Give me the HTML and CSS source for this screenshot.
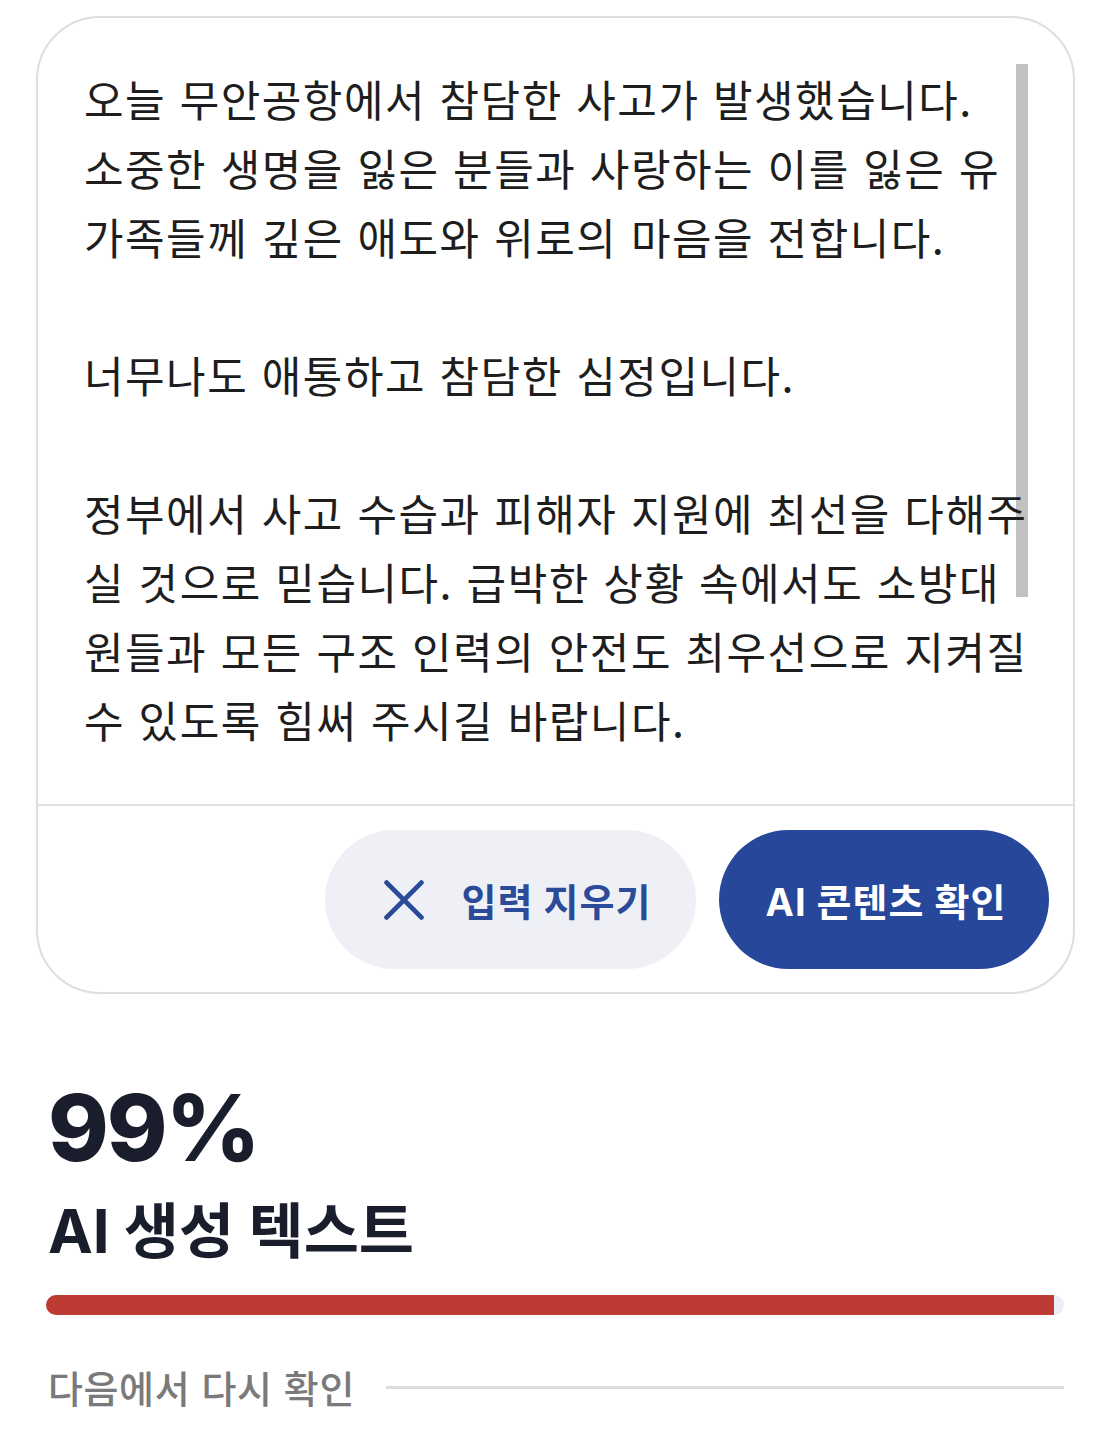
FILE: index.html
```html
<!DOCTYPE html>
<html lang="ko">
<head>
<meta charset="utf-8">
<link rel="stylesheet" href="styles.css">
</head>
<body>
<div class="card">
  <div class="input-area">
    <p>오늘 무안공항에서 참담한 사고가 발생했습니다.<br>소중한 생명을 잃은 분들과 사랑하는 이를 잃은 유<br>가족들께 깊은 애도와 위로의 마음을 전합니다.</p>
    <p>너무나도 애통하고 참담한 심정입니다.</p>
    <p>정부에서 사고 수습과 피해자 지원에 최선을 다해주<br>실 것으로 믿습니다. 급박한 상황 속에서도 소방대<br>원들과 모든 구조 인력의 안전도 최우선으로 지켜질<br>수 있도록 힘써 주시길 바랍니다.</p>
    <div class="scroll-thumb"></div>
  </div>
  <div class="actions">
    <button class="btn btn-clear">
      <svg class="x-icon" viewBox="0 0 40 40" width="40" height="40"><path d="M2.6 2.6 L37.4 37.4 M37.4 2.6 L2.6 37.4" stroke="#2b4a98" stroke-width="4.8" stroke-linecap="round" fill="none"/></svg>
      <span>입력 지우기</span>
    </button>
    <button class="btn btn-check">AI 콘텐츠 확인</button>
  </div>
</div>

<section class="result">
  <div class="percent">99%</div>
  <h2 class="label">AI 생성 텍스트</h2>
  <div class="track"><div class="fill" style="width:99%"></div></div>
  <div class="recheck">
    <span class="recheck-text">다음에서 다시 확인</span>
    <span class="recheck-line"></span>
  </div>
</section>
</body>
</html>
```

FILE: styles.css
```css
* { box-sizing: border-box; }
html, body { margin: 0; padding: 0; background: #ffffff; }
body {
  font-family: "Noto Sans CJK KR", "Noto Sans", sans-serif;
  color: #1e1e1e;
  width: 1111px;
}

.card {
  margin: 16px 0 0 36px;
  width: 1039px;
  border: 2px solid #dedede;
  border-radius: 64px;
  overflow: hidden;
}

.input-area {
  position: relative;
  padding: 46px 20px 50px 46px;
  border-bottom: 2px solid #e1e1e1;
}
.input-area p {
  margin: 0 0 69px 0;
  font-size: 43px;
  line-height: 69px;
  letter-spacing: 1.5px;
  white-space: nowrap;
  position: relative;
  z-index: 1;
}
.input-area p:last-of-type { margin-bottom: 0; }

.scroll-thumb {
  position: absolute;
  top: 46px;
  right: 45px;
  width: 12px;
  height: 533px;
  background: #c2c2c2;
}

.actions {
  display: flex;
  justify-content: flex-end;
  gap: 23px;
  padding: 24px 24px 23px 24px;
}
.btn {
  height: 139px;
  border: none;
  border-radius: 70px;
  display: flex;
  align-items: center;
  justify-content: center;
  font-family: Inter, "Noto Sans CJK KR", sans-serif;
  font-weight: 700;
  font-size: 38px;
  letter-spacing: 1px;
  cursor: pointer;
}
.btn-clear {
  width: 371px;
  padding: 0 0 0 14px;
  background: #eef0f6;
  color: #2b4a98;
  gap: 38px;
}
.x-icon { display: block; }
.btn-check {
  width: 330px;
  padding: 0 0 0 4px;
  background: #27489a;
  color: #ffffff;
}

.result {
  padding: 0 47px 0 46px;
}
.percent {
  margin: 88px 0 0 2px;
  font-family: Inter, "Liberation Sans", sans-serif;
  font-weight: 800;
  font-size: 92px;
  line-height: 1;
  letter-spacing: -2px;
  color: #1a1d2b;
}
.label {
  margin: 24px 0 0 2px;
  font-family: Inter, "Noto Sans CJK KR", sans-serif;
  font-weight: 700;
  font-size: 60px;
  line-height: 67px;
  color: #1a1d2b;
}
.track {
  margin-top: 30px;
  height: 20px;
  border-radius: 10px;
  background: #ececf4;
  overflow: hidden;
}
.fill {
  height: 100%;
  background: #bd3b33;
}
.recheck {
  display: flex;
  align-items: center;
  gap: 31px;
  margin-top: 47px;
  padding-left: 2px;
}
.recheck-text {
  font-size: 38px;
  font-weight: 500;
  letter-spacing: 0.6px;
  color: #7a7a7a;
  line-height: 50px;
  white-space: nowrap;
}
.recheck-line {
  flex: 1;
  height: 3px;
  background: #dddddd;
}
```
